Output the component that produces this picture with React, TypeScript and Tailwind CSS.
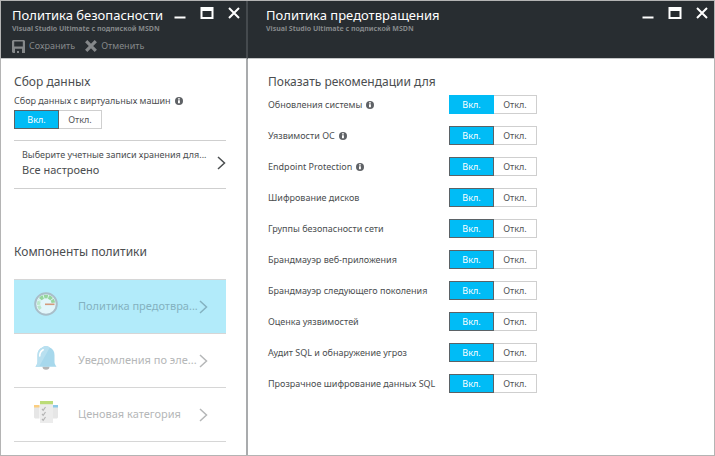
import { useState, type ReactNode } from "react";

function InfoIcon() {
  return (
    <svg className="size-2 shrink-0" viewBox="0 0 8 8" aria-hidden="true">
      <circle cx="4" cy="4" r="4" fill="#5f6266" />
      <path d="M3 3.200h1.900v3H3z" fill="#fff" />
      <path d="M3 1.300h1.900v1.200H3z" fill="#fff" />
    </svg>
  );
}

function Chevron() {
  return (
    <svg className="h-[14px] w-[9px] shrink-0" viewBox="0 0 9 14" fill="none" stroke="currentColor" strokeWidth="1.5" aria-hidden="true">
      <path d="M1 1l6.5 6L1 13" />
    </svg>
  );
}

function WindowButtons() {
  return (
    <div className="flex gap-[14px] pt-px text-white">
      <button type="button" aria-label="Свернуть">
        <svg className="h-3 w-3" viewBox="0 0 12 12">
          <rect x="0.5" y="9.500" width="11" height="2" fill="currentColor" />
        </svg>
      </button>
      <button type="button" aria-label="Развернуть">
        <svg className="h-3 w-[14px]" viewBox="0 0 14 12">
          <path d="M0.5 0h13v12h-13zM2.5 4v6h9V4z" fill="currentColor" fillRule="evenodd" />
        </svg>
      </button>
      <button type="button" aria-label="Закрыть">
        <svg className="h-3 w-3" viewBox="0 0 12 12" fill="none" stroke="currentColor" strokeWidth="2">
          <path d="M1 1l10 10M11 1L1 11" />
        </svg>
      </button>
    </div>
  );
}

function BladeHeader({ title, inset, children }: { title: string; inset: string; children?: ReactNode }) {
  return (
    <header className={`h-[58px] border-b border-b-[#c4c6c7] bg-[#282d31] pt-[5px] ${inset}`}>
      <div className="flex items-start justify-between">
        <h1 className="text-[13px] leading-[18px] whitespace-nowrap text-white">{title}</h1>
        <WindowButtons />
      </div>
      <p className="text-[7px] leading-[9px] font-bold whitespace-nowrap text-[#85888a]">
        Visual Studio Ultimate с подпиской MSDN
      </p>
      {children}
    </header>
  );
}

function Toggle({ label, plain = false }: { label: string; plain?: boolean }) {
  const [on, setOn] = useState(true);
  const active = plain ? "border-[#00bcf6] bg-[#00bcf6] text-white" : "border-[#5b6266] bg-[#00bcf6] text-white";
  const idle = "border-[#cfcfcf] bg-white text-[#505355]";
  return (
    <div role="group" aria-label={label} className="flex h-[19px] shrink-0 text-[9px] leading-[15px]">
      <button type="button" aria-pressed={on} onClick={() => setOn(true)} className={`w-[45px] border ${on ? active : idle}`}>
        Вкл.
      </button>
      <button type="button" aria-pressed={!on} onClick={() => setOn(false)} className={`w-[43px] border border-l-0 ${on ? idle : active}`}>
        Откл.
      </button>
    </div>
  );
}

function GaugeIcon() {
  return (
    <svg className="size-6" viewBox="0 0 24 24" aria-hidden="true">
      <circle cx="12" cy="12" r="10.8" fill="#e2f6fb" stroke="#a9bec9" strokeWidth="2" />
      <path d="M6.500 17A7.400 7.400 0 0 1 5.7 8.200" fill="none" stroke="#b9e8cb" strokeWidth="3.200" strokeDasharray="3.700 0.8" />
      <path d="M6.300 7.200A7.400 7.400 0 0 1 19.300 10.800" fill="none" stroke="#96d69e" strokeWidth="3.600" strokeDasharray="3.700 0.8" />
      <path d="M11 11.500h9.500v1.600H11z" fill="#d39a7c" />
    </svg>
  );
}

function BellIcon() {
  return (
    <svg className="size-6" viewBox="0 0 24 24" aria-hidden="true">
      <path d="M8.500 20.500h7a3.500 3.300 0 0 1-7 0z" fill="#b5b5b5" />
      <path d="M12 0c2 0 2.500.9 3.800 1.500C19 3 20.500 5.500 20.500 9v7c0 2 .8 2.700 2 4.800H1.500c1.200-2.100 2-2.800 2-4.800V9c0-3.500 1.500-6 4.700-7.500C9.500.9 10 0 12 0z" fill="#a7d8ec" />
      <path d="M12 0c2 0 2.500.9 3.800 1.500L5 20.800H1.500c1.200-2.100 2-2.800 2-4.800V9c0-3.500 1.500-6 4.700-7.500C9.500.9 10 0 12 0z" fill="#b9e0f0" />
      <path d="M5.700 10c0-3.300 1.300-5 3.500-6.200" fill="none" stroke="#fff" strokeWidth="1.600" strokeLinecap="round" />
    </svg>
  );
}

function ChecklistIcon() {
  return (
    <svg className="size-6" viewBox="0 0 24 24" aria-hidden="true">
      <path d="M0 6h5.500v12.500H1L0 17.500z" fill="#e6e6e6" />
      <path d="M0 5h5.500v2.500H0z" fill="#fbce80" />
      <path d="M19 6h5v11.500l-1 1h-4z" fill="#e6e6e6" />
      <path d="M19 5h5v2.500h-5z" fill="#8cc8e8" />
      <path d="M6 1.500h13V23H6z" fill="#ececec" />
      <path d="M6 1h13v3.200H6z" fill="#bcdc78" />
      <path d="M8 9l1.200 1.300L11.500 7M8 14l1.200 1.300 2.300-3.300M8 19l1.200 1.300 2.300-3.300" fill="none" stroke="#b4b4b4" strokeWidth="1.200" />
    </svg>
  );
}

const components = [
  { label: "Политика предотвра...", icon: <GaugeIcon />, selected: true },
  { label: "Уведомления по эле...", icon: <BellIcon />, selected: false },
  { label: "Ценовая категория", icon: <ChecklistIcon />, selected: false },
];

const recommendations = [
  { label: "Обновления системы", info: true },
  { label: "Уязвимости ОС", info: true },
  { label: "Endpoint Protection", info: true },
  { label: "Шифрование дисков", info: false },
  { label: "Группы безопасности сети", info: false },
  { label: "Брандмауэр веб-приложения", info: false },
  { label: "Брандмауэр следующего поколения", info: false },
  { label: "Оценка уязвимостей", info: false },
  { label: "Аудит SQL и обнаружение угроз", info: false },
  { label: "Прозрачное шифрование данных SQL", info: false },
];

export default function App() {
  return (
    <div className="flex min-h-screen border border-[#b4b4b4] bg-white font-['Noto_Sans','Open_Sans',sans-serif] text-[#4b4e50]">
      <section className="flex w-[247px] shrink-0 flex-col">
        <BladeHeader title="Политика безопасности" inset="border-r-2 border-r-[#454a4e] pr-[6px] pl-[11px]">
          <div className="mt-[6px] flex gap-[10px] text-[9px] leading-[14px] text-[#85888a]">
            <button type="button" className="flex items-center gap-1">
              <svg className="size-[13px]" viewBox="0 0 13 13" aria-hidden="true">
                <path d="M1 0h11l1 1v12H1l-1-1V1zM2.200 1.500v5h8.600v-5zM3 8.800V13h2v-2h2v2h3V8.800z" fill="currentColor" fillRule="evenodd" />
              </svg>
              Сохранить
            </button>
            <button type="button" className="flex items-center gap-1">
              <svg className="size-[12px]" viewBox="0 0 12 12" fill="none" stroke="currentColor" strokeWidth="3.200" aria-hidden="true">
                <path d="M1.200 1.200l9.600 9.600M10.800 1.200l-9.600 9.600" />
              </svg>
              Отменить
            </button>
          </div>
        </BladeHeader>

        <div className="flex-1 border-r-2 border-[#a9abad] pt-[14px] pr-[20px] pb-[10px] pl-[13px]">
          <h2 className="text-[12px] leading-[18px]">Сбор данных</h2>
          <div className="mt-[3px] mb-[2px] flex items-center gap-1 text-[9px] leading-[14px] whitespace-nowrap">
            Сбор данных с виртуальных машин
            <InfoIcon />
          </div>
          <Toggle label="Сбор данных с виртуальных машин" />

          <button type="button" className="mt-[11px] flex h-[49px] w-full items-center justify-between border-y border-[#cfcfcf] pb-[4px] pl-2 text-left">
            <span>
              <span className="block text-[9px] leading-[14px] whitespace-nowrap">Выберите учетные записи хранения для...</span>
              <span className="block text-[11px] leading-[15px]">Все настроено</span>
            </span>
            <Chevron />
          </button>

          <h2 className="mt-[54px] text-[12px] leading-[18px]">Компоненты политики</h2>
          <ul className="mt-[18px] border-t border-[#d6d6d6]">
            {components.map((item) => (
              <li key={item.label} className="border-b border-[#d6d6d6]">
                <button
                  type="button"
                  className={`flex h-[53px] w-full items-center px-[20px] text-left text-[11px] ${
                    item.selected ? "bg-[#b2ebfa] text-[#84b2c0]" : "text-[#b5b7b8]"
                  }`}
                >
                  <span className="mb-[6px] shrink-0">{item.icon}</span>
                  <span className="ml-[20px] w-[121px] shrink-0 whitespace-nowrap">{item.label}</span>
                  <Chevron />
                </button>
              </li>
            ))}
          </ul>
        </div>
      </section>

      <section className="min-w-0 flex-1">
        <BladeHeader title="Политика предотвращения" inset="pr-[6px] pl-[18px]" />
        <div className="pt-[14px] pl-[20px]">
          <h2 className="text-[12px] leading-[18px]">Показать рекомендации для</h2>
          <ul className="-mt-[2px]">
            {recommendations.map((item, index) => (
              <li key={item.label} className="flex h-[31px] items-center">
                <span className="flex w-[181px] shrink-0 items-center gap-1 text-[9px] whitespace-nowrap">
                  {item.label}
                  {item.info && <InfoIcon />}
                </span>
                <Toggle label={item.label} plain={index === 0} />
              </li>
            ))}
          </ul>
        </div>
      </section>
    </div>
  );
}
